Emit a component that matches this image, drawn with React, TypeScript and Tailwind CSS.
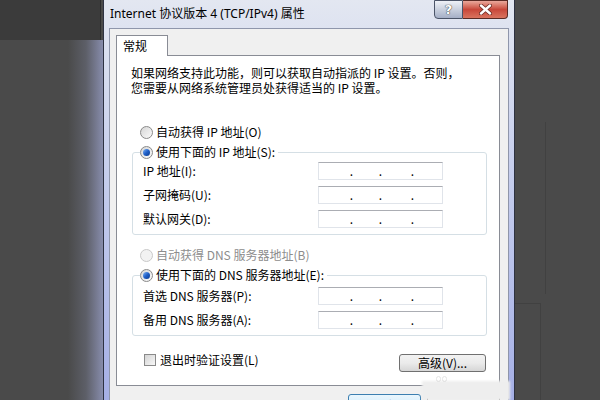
import React from "react";

const cjk = "font-['Noto_Sans_CJK_SC',sans-serif]";

function Radio({ checked, disabled }: { checked?: boolean; disabled?: boolean }) {
  return (
    <span
      className={
        "w-[13px] h-[13px] rounded-full border flex items-center justify-center shrink-0 " +
        (disabled
          ? "border-[#c9c9c9] bg-[#f2f2f2]"
          : "border-[#8a8a8a] bg-gradient-to-br from-[#d6d6d6] to-[#fbfbfb]")
      }
    >
      {checked && (
        <span className="w-[7px] h-[7px] rounded-full bg-gradient-to-br from-[#7fb4f4] via-[#1f5fc8] to-[#0b3a8c]" />
      )}
    </span>
  );
}

function IpBox() {
  return (
    <div className="w-[125px] h-[18px] border border-[#e0e4ea] border-t-[#abadb3] bg-white flex text-[12px] leading-[16px] text-black">
      <span className="w-[34px] text-right">.</span>
      <span className="w-[29px] text-right">.</span>
      <span className="w-[32px] text-right">.</span>
    </div>
  );
}

function Field({ label }: { label: string }) {
  return (
    <div className="flex items-center h-[18px]">
      <span className="w-[185px] pl-[10px] text-[12px] leading-[16px]">{label}</span>
      <IpBox />
    </div>
  );
}

function RadioRow({ text, checked, disabled, legend }: { text: string; checked?: boolean; disabled?: boolean; legend?: boolean }) {
  return (
    <div
      className={
        "flex items-center gap-[3px] h-[16px] w-fit text-[12px] leading-[16px] " +
        (disabled ? "text-[#8d8d8d] " : "text-black ") +
        (legend ? "-mt-[9px] ml-[7px] bg-white pr-[3px]" : "ml-[23px]")
      }
    >
      <Radio checked={checked} disabled={disabled} />
      <span>{text}</span>
    </div>
  );
}

function Button({ children, focused, className }: { children: React.ReactNode; focused?: boolean; className?: string }) {
  return (
    <div
      className={
        "flex items-center justify-center rounded-[3px] border text-[12px] text-black bg-gradient-to-b " +
        (focused
          ? "border-[#3c7fb1] from-[#eaf6fd] to-[#bee6fd] "
          : "border-[#707070] from-[#f2f2f2] via-[#ebebeb] to-[#d6d6d6] ") +
        (className ?? "")
      }
    >
      {children}
    </div>
  );
}

export default function App() {
  return (
    <div className={"relative w-[600px] h-[400px] overflow-hidden bg-[#4a4a4a] " + cjk}>
      {/* desktop behind */}
      <div className="absolute left-0 top-0 w-[101px] h-[40px] bg-[#3b3b3b] border-r border-[#2c2c2c]" />
      <div className="absolute left-[68px] top-[40px] w-[36px] h-[360px] bg-gradient-to-r from-[#4a4a4a] via-[#5d5f68] to-[#8a8fb0]" />
      <div className="absolute left-[545px] top-[122px] w-px h-[172px] bg-[#414141]" />
      <div className="absolute left-[515px] top-[303px] w-[26px] h-[97px] border-t border-r border-[#414141]" />

      {/* dialog window */}
      <div className="absolute left-[103px] -top-px w-[412px] h-[420px] border border-[#2e3242] bg-gradient-to-b from-[#e3e7f1] via-[#cdd4ee] via-30% to-[#a3ade5] flex flex-col">
        <div className="h-[28px] flex items-center pl-[6px]">
          <span className="text-[12px] leading-[16px] text-black font-['Noto_Sans','Noto_Sans_CJK_SC',sans-serif]">
            Internet 协议版本 4 (TCP/IPv4) 属性
          </span>
          <div className="ml-auto mr-[6px] self-start flex h-[19px]">
            <div className="w-[29px] h-[19px] border border-[#4b5468] rounded-bl-[4px] bg-gradient-to-b from-[#eef1f7] via-[#c9d0de] to-[#a5afc6] flex items-center justify-center">
              <span className="text-white font-bold text-[13px] leading-none font-['DejaVu_Sans',sans-serif] [text-shadow:0_0_1px_#333,0_0_1px_#333]">?</span>
            </div>
            <div className="w-[45px] h-[19px] border border-l-0 border-[#5a2a24] rounded-br-[4px] bg-gradient-to-b from-[#e9a89c] via-[#c8473a] to-[#d9735f] flex items-center justify-center">
              <svg width="13" height="11" viewBox="0 0 13 11">
                <path d="M2 1.5 L11 9.5 M11 1.5 L2 9.5" stroke="#6b2a22" strokeWidth="4" strokeLinecap="round" />
                <path d="M2 1.5 L11 9.5 M11 1.5 L2 9.5" stroke="#ffffff" strokeWidth="2.4" strokeLinecap="round" />
              </svg>
            </div>
          </div>
        </div>

        <div className="mx-[5px] flex-1 border border-[#8f96ab] bg-[#f0f0f0] flex flex-col">
          {/* tab */}
          <div className="relative z-10 ml-[6px] mt-[6px] w-[52px] h-[21px] border border-b-0 border-[#898c95] bg-white pl-[6px] text-[12px] leading-[20px] text-black">
            常规
          </div>
          <div className="-mt-px ml-[6px] w-[384px] h-[331px] border border-[#898c95] bg-white flex flex-col text-black">
            <div className="mt-[9px] ml-[14px] text-[12px] leading-[15px]">
              <p>如果网络支持此功能，则可以获取自动指派的 IP 设置。否则，</p>
              <p>您需要从网络系统管理员处获得适当的 IP 设置。</p>
            </div>

            <div className="mt-[29px]">
              <RadioRow text="自动获得 IP 地址(O)" />
            </div>
            <div className="mt-[12px] ml-[15px] w-[355px] border border-[#d5dfe5] rounded-[3px] pb-[6px] flex flex-col">
              <RadioRow text="使用下面的 IP 地址(S):" checked legend />
              <div className="mt-[2px] flex flex-col gap-[6px]">
                <Field label="IP 地址(I):" />
                <Field label="子网掩码(U):" />
                <Field label="默认网关(D):" />
              </div>
            </div>

            <div className="mt-[12px]">
              <RadioRow text="自动获得 DNS 服务器地址(B)" disabled />
            </div>
            <div className="mt-[12px] ml-[15px] w-[355px] border border-[#d5dfe5] rounded-[3px] pb-[6px] flex flex-col">
              <RadioRow text="使用下面的 DNS 服务器地址(E):" checked legend />
              <div className="mt-[4px] flex flex-col gap-[6px]">
                <Field label="首选 DNS 服务器(P):" />
                <Field label="备用 DNS 服务器(A):" />
              </div>
            </div>

            <div className="mt-[16px] flex items-start">
              <div className="ml-[27px] h-[16px] flex items-center gap-[4px] text-[12px] leading-[16px]">
                <span className="w-[12px] h-[12px] border border-[#8a8a8a] bg-gradient-to-br from-[#d4d4d4] to-[#f8f8f8]" />
                <span>退出时验证设置(L)</span>
              </div>
              <Button className="ml-auto mr-[13px] mt-[2px] w-[87px] h-[18px] leading-[16px]">高级(V)...</Button>
            </div>
          </div>

          <div className="mt-[8px] mr-[8px] flex justify-end gap-[6px]">
            <Button focused className="w-[73px] h-[23px]">确定</Button>
            <Button className="w-[73px] h-[23px]">取消</Button>
          </div>
        </div>
      </div>

      {/* watermark */}
      <div className="absolute left-[422px] top-[381px] w-[88px] h-[19px] bg-[#eeeeee] blur-[1px]" />
      <div className="absolute left-[436px] top-[376px] flex gap-[1px] opacity-40">
        <span className="w-[5px] h-[6px] rounded-full border border-[#bbbbbb]" />
        <span className="w-[5px] h-[6px] rounded-full border border-[#bbbbbb]" />
      </div>
    </div>
  );
}
